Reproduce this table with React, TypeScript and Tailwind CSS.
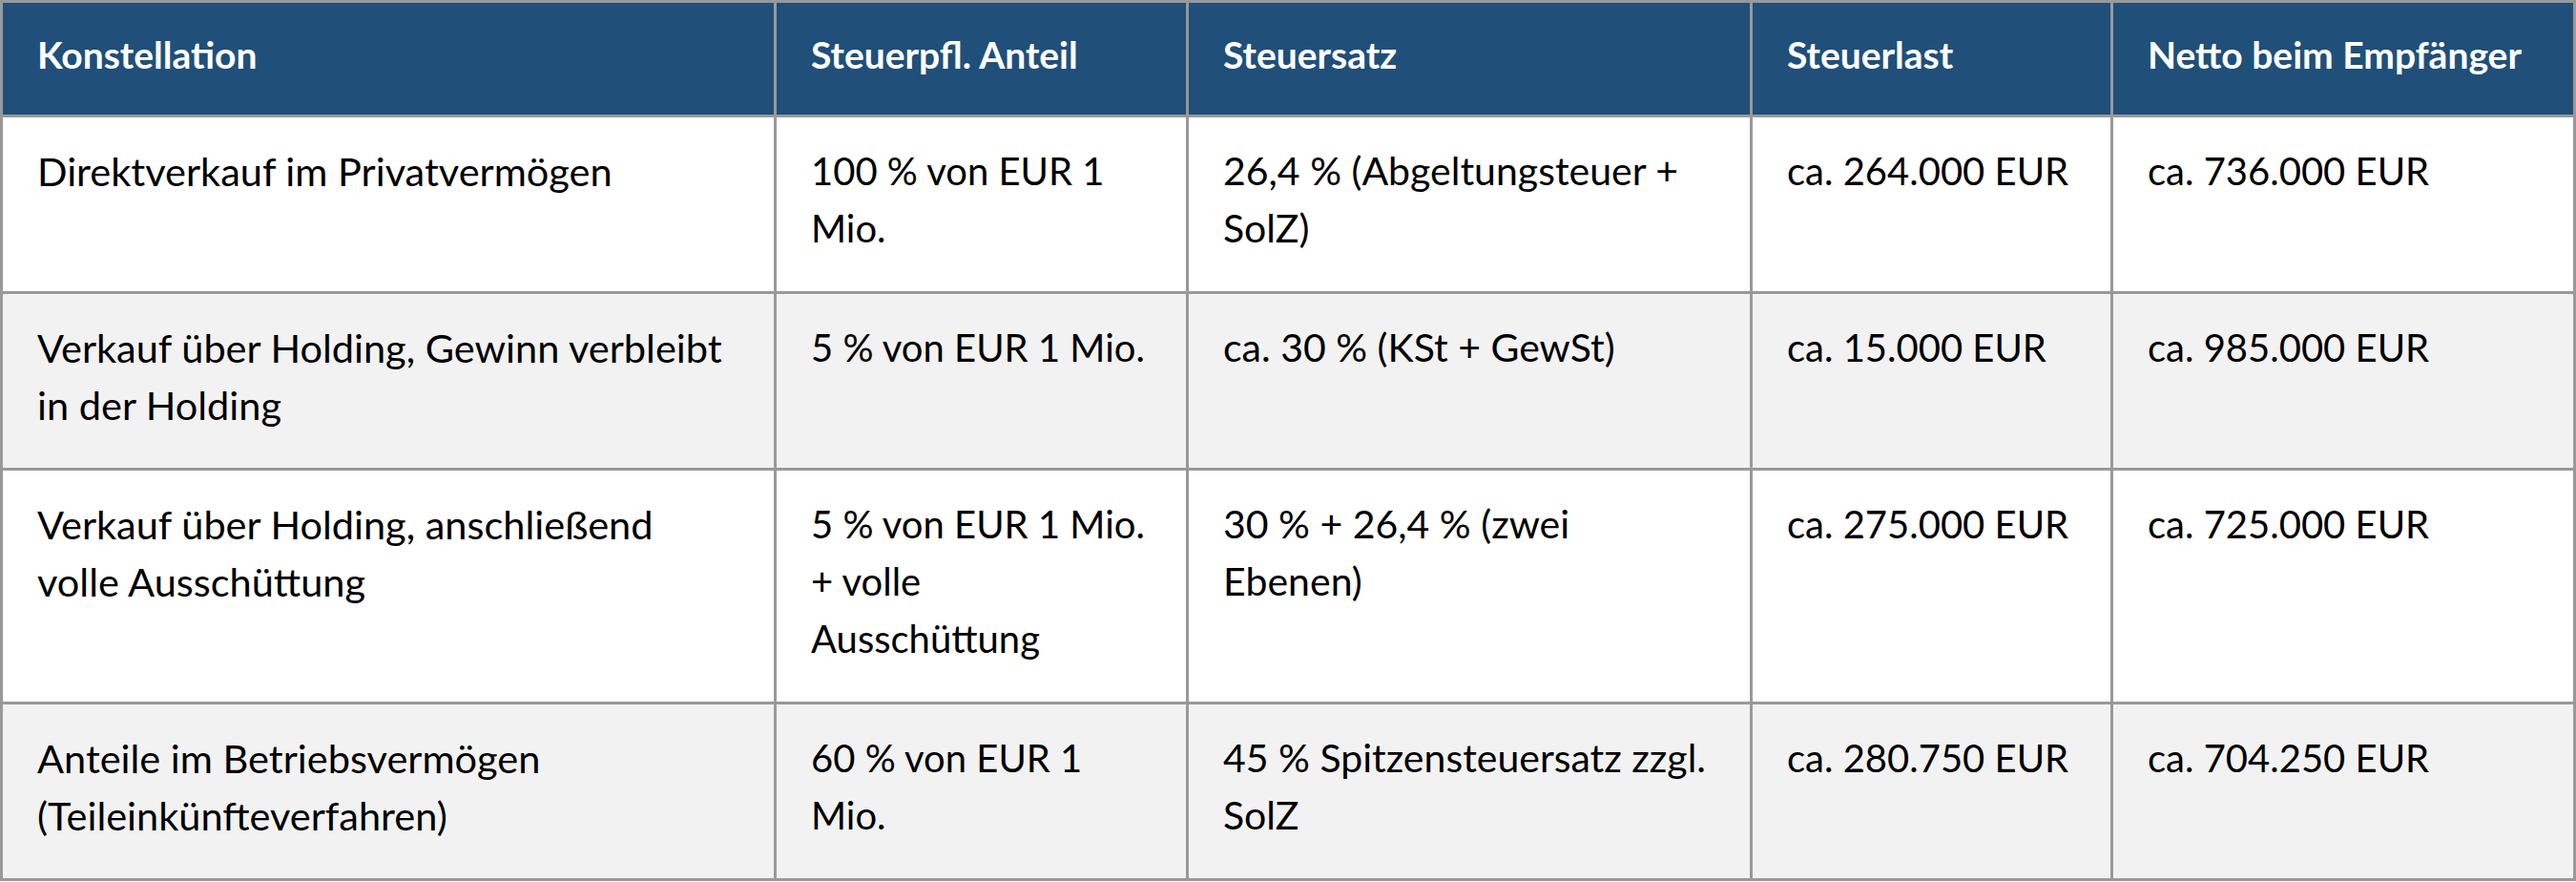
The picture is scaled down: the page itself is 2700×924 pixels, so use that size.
import React from "react";

const headers = [
  "Konstellation",
  "Steuerpfl. Anteil",
  "Steuersatz",
  "Steuerlast",
  "Netto beim Empfänger",
];

// per-column sizes so the lines break where the original breaks
const colCls = ["text-[41.5px]", "text-[40px]", "text-[41px]", "text-[40px]", "text-[40px]"];

const rows: string[][] = [
  [
    "Direktverkauf im Privatvermögen",
    "100 % von EUR 1 Mio.",
    "26,4 % (Abgeltungsteuer + SolZ)",
    "ca. 264.000 EUR",
    "ca. 736.000 EUR",
  ],
  [
    "Verkauf über Holding, Gewinn verbleibt in der Holding",
    "5 % von EUR 1 Mio.",
    "ca. 30 % (KSt + GewSt)",
    "ca. 15.000 EUR",
    "ca. 985.000 EUR",
  ],
  [
    "Verkauf über Holding, anschließend volle Ausschüttung",
    "5 % von EUR 1 Mio. + volle Ausschüttung",
    "30 % + 26,4 % (zwei Ebenen)",
    "ca. 275.000 EUR",
    "ca. 725.000 EUR",
  ],
  [
    "Anteile im Betriebsvermögen (Teileinkünfteverfahren)",
    "60 % von EUR 1 Mio.",
    "45 % Spitzensteuersatz zzgl. SolZ",
    "ca. 280.750 EUR",
    "ca. 704.250 EUR",
  ],
];

export default function App() {
  return (
    <div className="bg-white font-['Lato','Liberation_Sans',sans-serif]">
      <div className="grid w-[2700px] grid-cols-[811px_432px_591px_378px_488px] leading-[60px]">
        {headers.map((h, i) => (
          <div
            key={h}
            className={`border-l-[3px] border-t-[3px] border-[#999999] bg-[#204f79] pl-[36px] pr-[24px] pt-[24px] pb-[33px] text-[39px] font-bold text-white ${
              i === headers.length - 1 ? "border-r-[3px]" : ""
            }`}
          >
            {h}
          </div>
        ))}
        {rows.map((row, r) =>
          row.map((cell, c) => (
            <div
              key={`${r}-${c}`}
              className={`border-l-[3px] border-t-[3px] border-[#999999] px-[36px] ${colCls[c]} pt-[26px] pb-[36px] text-black ${
                r % 2 === 1 ? "bg-[#f2f2f2]" : "bg-white"
              } ${c === row.length - 1 ? "border-r-[3px]" : ""} ${
                r === rows.length - 1 ? "border-b-[3px]" : ""
              }`}
            >
              {cell}
            </div>
          ))
        )}
      </div>
    </div>
  );
}
